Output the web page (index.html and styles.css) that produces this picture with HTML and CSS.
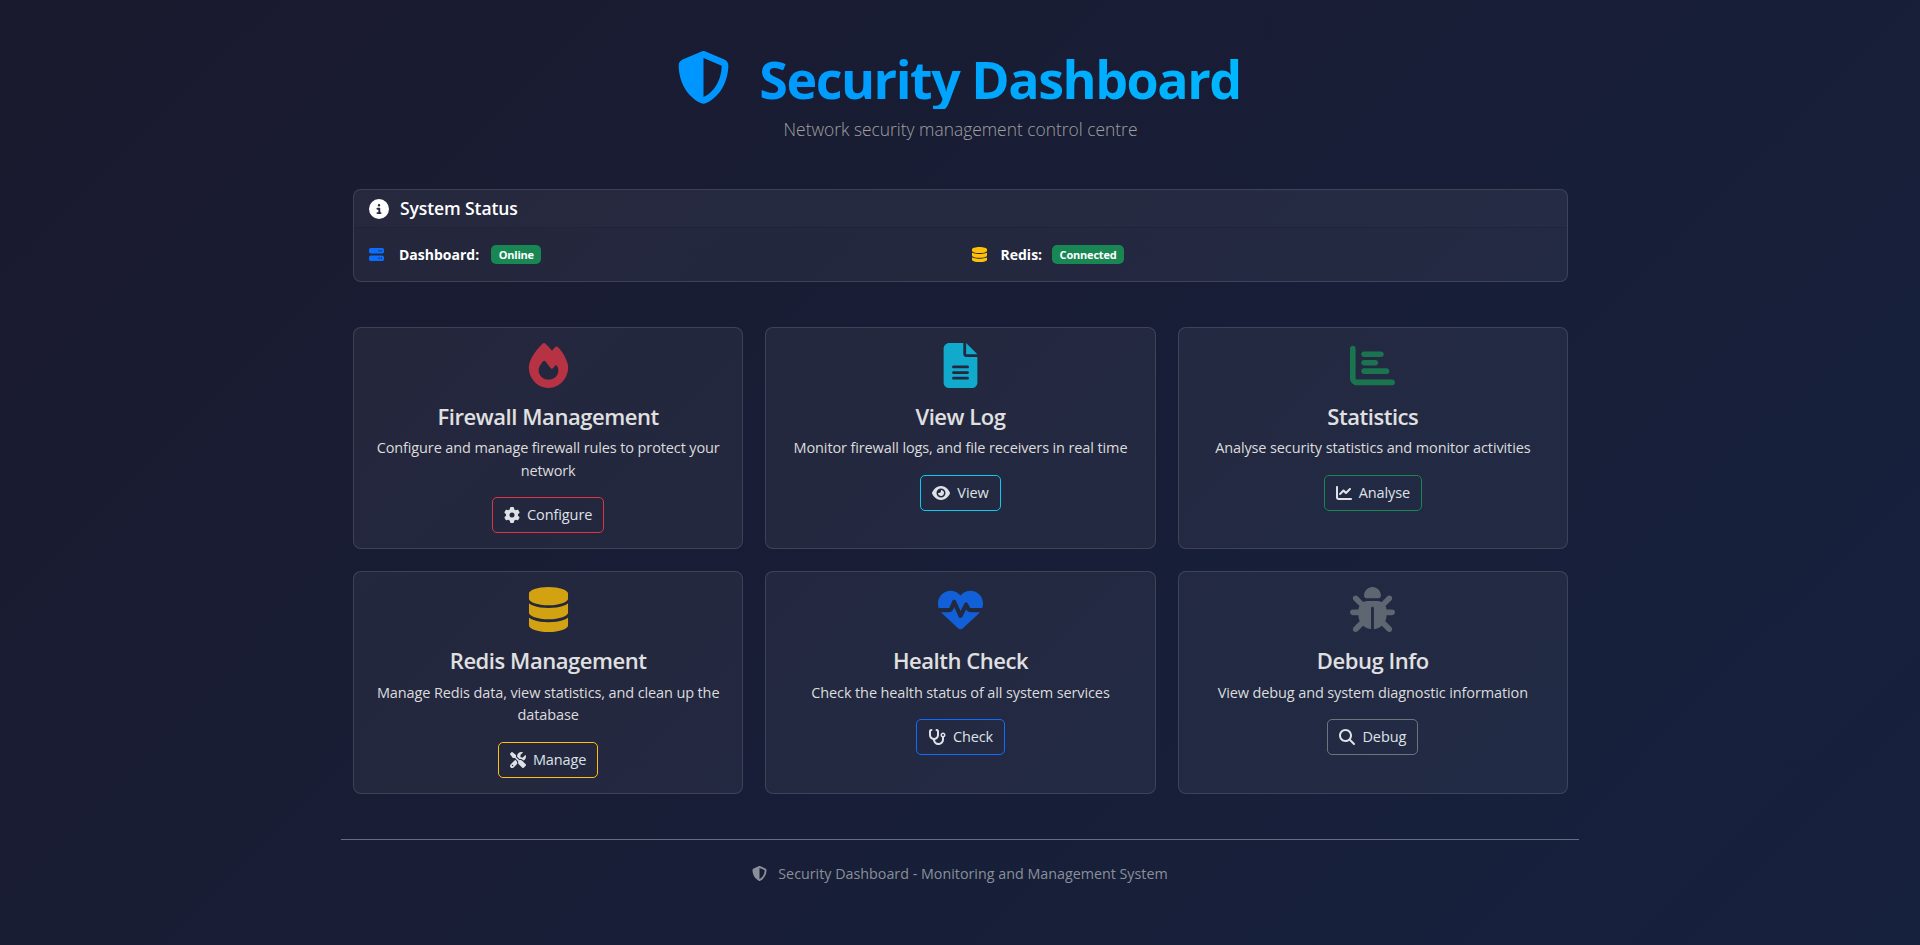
FILE: index.html
```html
<!DOCTYPE html>
<html lang="en">
  <head>
    <meta charset="UTF-8" />
    <meta name="viewport" content="width=device-width, initial-scale=1.0" />
    <title>Security Dashboard</title>
    <link rel="stylesheet" href="styles.css">
  </head>
  <body>
    <svg class="sprites" aria-hidden="true">
      <symbol id="i-shield" viewBox="0 0 512 512"><path d="M256 0c4.6 0 9.2 1 13.4 2.9L457.7 82.8c22 9.3 38.4 31 38.3 57.2c-.5 99.2-41.3 280.7-213.6 363.2c-16.7 8-36.1 8-52.8 0C57.3 420.7 16.5 239.2 16 140c-.1-26.2 16.3-47.9 38.3-57.2L242.7 2.9C246.8 1 251.4 0 256 0zm0 66.8V444.8C394 378 431.1 230.1 432 141.4L256 66.8l0 0z"/></symbol>
      <symbol id="i-db" viewBox="0 0 448 512" preserveAspectRatio="none"><path d="M448 80v48c0 44.2-100.3 80-224 80S0 172.2 0 128V80C0 35.8 100.3 0 224 0S448 35.8 448 80zM393.2 214.7c20.8-7.4 39.9-16.9 54.8-28.6V288c0 44.2-100.3 80-224 80S0 332.2 0 288V186.1c14.9 11.8 34 21.2 54.8 28.6C99.7 230.7 159.5 240 224 240s124.3-9.3 169.2-25.3zM0 346.1c14.9 11.8 34 21.2 54.8 28.6C99.7 390.7 159.5 400 224 400s124.3-9.3 169.2-25.3c20.8-7.4 39.9-16.9 54.8-28.6V432c0 44.2-100.3 80-224 80S0 476.2 0 432V346.1z"/></symbol>
    </svg>

    <div class="container">
      <header class="top">
        <h1 class="title">
          <svg class="title-icon"><use href="#i-shield"/></svg>
          <span class="title-text">Security Dashboard</span>
        </h1>
        <p class="lead">Network security management control centre</p>
      </header>

      <section class="status">
        <div class="status-head">
          <svg class="info-icon" viewBox="0 0 512 512"><path d="M256 512A256 256 0 1 0 256 0a256 256 0 1 0 0 512zM216 336h24V272H216c-13.3 0-24-10.7-24-24s10.7-24 24-24h48c13.3 0 24 10.7 24 24v88h8c13.3 0 24 10.7 24 24s-10.7 24-24 24H216c-13.3 0-24-10.7-24-24s10.7-24 24-24zm40-208a32 32 0 1 1 0 64 32 32 0 1 1 0-64z"/></svg>
          <h2>System Status</h2>
        </div>
        <div class="status-body">
          <div class="status-item">
            <svg class="status-icon blue" viewBox="0 0 512 512"><path d="M64 32C28.7 32 0 60.7 0 96v64c0 35.3 28.7 64 64 64H448c35.3 0 64-28.7 64-64V96c0-35.3-28.7-64-64-64H64zm280 72a24 24 0 1 1 0 48 24 24 0 1 1 0-48zm48 24a24 24 0 1 1 48 0 24 24 0 1 1 -48 0zM64 288c-35.3 0-64 28.7-64 64v64c0 35.3 28.7 64 64 64H448c35.3 0 64-28.7 64-64V352c0-35.3-28.7-64-64-64H64zm280 72a24 24 0 1 1 0 48 24 24 0 1 1 0-48zm56 24a24 24 0 1 1 48 0 24 24 0 1 1 -48 0z"/></svg>
            <strong>Dashboard:</strong>
            <span class="badge">Online</span>
          </div>
          <div class="status-item second">
            <svg class="status-icon yellow"><use href="#i-db"/></svg>
            <strong>Redis:</strong>
            <span class="badge">Connected</span>
          </div>
        </div>
      </section>

      <main class="cards">
        <div class="card">
          <svg class="card-icon red" viewBox="0 0 448 512"><path d="M159.3 5.4c7.8-7.3 19.9-7.2 27.7 .1c27.6 25.9 53.5 53.8 77.7 84c11-14.4 23.5-30.1 37-42.9c7.9-7.4 20.1-7.4 28 .1c34.6 33 63.9 76.6 84.5 118c20.3 40.8 33.8 82.5 33.8 111.9C448 404.2 348.2 512 224 512C98.4 512 0 404.1 0 276.5c0-38.4 17.8-85.3 45.4-131.7C73.3 97.7 112.7 48.6 159.3 5.4zM225.7 416c25.3 0 47.7-7 68.8-21c42.1-29.4 53.4-88.2 28.1-134.4c-4.5-9-16-9.6-22.5-2l-25.2 29.3c-6.6 7.6-18.5 7.4-24.7-.5c-16.5-21-46-58.5-62.8-79.8c-6.3-8-18.3-8.1-24.7-.1c-33.8 42.5-50.8 69.3-50.8 99.4C112 375.4 162.6 416 225.7 416z"/></svg>
          <h3>Firewall Management</h3>
          <p>Configure and manage firewall rules to protect your network</p>
          <a class="btn btn-red" href="#">
            <svg class="btn-icon" viewBox="0 0 512 512"><path d="M495.9 166.6c3.2 8.7 .5 18.4-6.4 24.6l-43.3 39.4c1.1 8.3 1.7 16.8 1.7 25.4s-.6 17.1-1.7 25.4l43.3 39.4c6.9 6.2 9.6 15.9 6.4 24.6c-4.4 11.9-9.7 23.3-15.8 34.3l-4.7 8.1c-6.6 11-14 21.4-22.1 31.2c-5.9 7.2-15.7 9.6-24.5 6.8l-55.7-17.7c-13.4 10.3-28.2 18.9-44 25.4l-12.5 57.1c-2 9.1-9 16.3-18.2 17.8c-13.8 2.3-28 3.5-42.5 3.5s-28.7-1.2-42.5-3.5c-9.2-1.5-16.2-8.7-18.2-17.8l-12.5-57.1c-15.8-6.5-30.6-15.1-44-25.4L83.1 425.9c-8.8 2.8-18.6 .3-24.5-6.8c-8.1-9.8-15.5-20.2-22.1-31.2l-4.7-8.1c-6.1-11-11.4-22.4-15.8-34.3c-3.2-8.7-.5-18.4 6.4-24.6l43.3-39.4C64.6 273.1 64 264.6 64 256s.6-17.1 1.7-25.4L22.4 191.2c-6.9-6.2-9.6-15.9-6.4-24.6c4.4-11.9 9.7-23.3 15.8-34.3l4.7-8.1c6.6-11 14-21.4 22.1-31.2c5.9-7.2 15.7-9.6 24.5-6.8l55.7 17.7c13.4-10.3 28.2-18.9 44-25.4l12.5-57.1c2-9.1 9-16.3 18.2-17.8C227.3 1.2 241.5 0 256 0s28.7 1.2 42.5 3.5c9.2 1.5 16.2 8.7 18.2 17.8l12.5 57.1c15.8 6.5 30.6 15.1 44 25.4l55.7-17.7c8.8-2.8 18.6-.3 24.5 6.8c8.1 9.8 15.5 20.2 22.1 31.2l4.7 8.1c6.1 11 11.4 22.4 15.8 34.3zM256 336a80 80 0 1 0 0-160 80 80 0 1 0 0 160z"/></svg>
            Configure
          </a>
        </div>

        <div class="card">
          <svg class="card-icon cyan" viewBox="0 0 384 512"><path d="M64 0C28.7 0 0 28.7 0 64V448c0 35.3 28.7 64 64 64H320c35.3 0 64-28.7 64-64V160H256c-17.7 0-32-14.3-32-32V0H64zM256 0V128H384L256 0zM112 256H272c8.8 0 16 7.2 16 16s-7.2 16-16 16H112c-8.8 0-16-7.2-16-16s7.2-16 16-16zm0 64H272c8.8 0 16 7.2 16 16s-7.2 16-16 16H112c-8.8 0-16-7.2-16-16s7.2-16 16-16zm0 64H272c8.8 0 16 7.2 16 16s-7.2 16-16 16H112c-8.8 0-16-7.2-16-16s7.2-16 16-16z"/></svg>
          <h3>View Log</h3>
          <p>Monitor firewall logs, and file receivers in real time</p>
          <a class="btn btn-cyan" href="#">
            <svg class="btn-icon wide" viewBox="0 0 576 512"><path d="M288 32c-80.8 0-145.5 36.8-192.6 80.6C48.6 156 17.3 208 2.5 243.7c-3.3 7.9-3.3 16.7 0 24.6C17.3 304 48.6 356 95.4 399.4C142.5 443.2 207.2 480 288 480s145.5-36.8 192.6-80.6c46.8-43.5 78.1-95.4 93-131.1c3.3-7.9 3.3-16.7 0-24.6c-14.9-35.7-46.2-87.7-93-131.1C433.5 68.8 368.8 32 288 32zM144 256a144 144 0 1 1 288 0 144 144 0 1 1 -288 0zm144-64c0 35.3-28.7 64-64 64c-7.1 0-13.9-1.2-20.3-3.3c-5.5-1.8-11.9 1.6-11.7 7.4c.3 6.9 1.3 13.8 3.2 20.7c13.7 51.2 66.4 81.6 117.6 67.9s81.6-66.4 67.9-117.6c-11.1-41.5-47.8-69.4-88.6-71.1c-5.8-.2-9.2 6.1-7.4 11.7c2.1 6.4 3.3 13.2 3.3 20.3z"/></svg>
            View
          </a>
        </div>

        <div class="card">
          <svg class="card-icon green" viewBox="0 0 512 512"><path d="M32 32c17.7 0 32 14.3 32 32V400c0 8.8 7.2 16 16 16H480c17.7 0 32 14.3 32 32s-14.3 32-32 32H80c-44.2 0-80-35.8-80-80V64C0 46.3 14.3 32 32 32zm96 96c0-17.7 14.3-32 32-32l192 0c17.7 0 32 14.3 32 32s-14.3 32-32 32l-192 0c-17.7 0-32-14.3-32-32zm32 64H288c17.7 0 32 14.3 32 32s-14.3 32-32 32H160c-17.7 0-32-14.3-32-32s14.3-32 32-32zm0 96H416c17.7 0 32 14.3 32 32s-14.3 32-32 32H160c-17.7 0-32-14.3-32-32s14.3-32 32-32z"/></svg>
          <h3>Statistics</h3>
          <p>Analyse security statistics and monitor activities</p>
          <a class="btn btn-green" href="#">
            <svg class="btn-icon" viewBox="0 0 512 512"><path d="M64 64c0-17.7-14.3-32-32-32S0 46.3 0 64V400c0 44.2 35.8 80 80 80H480c17.7 0 32-14.3 32-32s-14.3-32-32-32H80c-8.8 0-16-7.2-16-16V64zm406.6 86.6c12.5-12.5 12.5-32.8 0-45.3s-32.8-12.5-45.3 0L320 210.7l-57.4-57.4c-12.5-12.5-32.8-12.5-45.3 0l-112 112c-12.5 12.5-12.5 32.8 0 45.3s32.8 12.5 45.3 0L240 221.3l57.4 57.4c12.5 12.5 32.8 12.5 45.3 0l128-128z"/></svg>
            Analyse
          </a>
        </div>

        <div class="card">
          <svg class="card-icon yellow" viewBox="0 0 448 512"><use href="#i-db"/></svg>
          <h3>Redis Management</h3>
          <p>Manage Redis data, view statistics, and clean up the database</p>
          <a class="btn btn-yellow" href="#">
            <svg class="btn-icon" viewBox="0 0 512 512"><path d="M78.6 5C69.1-2.4 55.6-1.5 47 7L7 47c-8.5 8.5-9.4 22-2.1 31.6l80 104c4.5 5.9 11.6 9.4 19 9.4h54.1l109 109c-14.7 29-10 65.4 14.3 89.6l112 112c12.5 12.5 32.8 12.5 45.3 0l64-64c12.5-12.5 12.5-32.8 0-45.3l-112-112c-24.2-24.2-60.6-29-89.6-14.3l-109-109V104c0-7.5-3.5-14.5-9.4-19L78.6 5zM19.9 396.1C7.2 408.8 0 426.1 0 444.1C0 481.6 30.4 512 67.9 512c18 0 35.3-7.2 48-19.9L233.7 374.3c-7.8-20.9-9-43.6-3.6-65.1l-61.7-61.7L19.9 396.1zM512 144c0-10.5-1.1-20.7-3.2-30.5c-2.4-11.2-16.1-14.1-24.2-6l-63.9 63.9c-3 3-7.1 4.7-11.3 4.7H352c-8.8 0-16-7.2-16-16V102.6c0-4.2 1.7-8.3 4.7-11.3l63.9-63.9c8.1-8.1 5.2-21.8-6-24.2C388.7 1.1 378.5 0 368 0C288.5 0 224 64.5 224 144l0 .8 85.3 85.3c36-9.1 75.8 .5 104 28.7L429 274.5c49-23 83-72.8 83-130.5zM56 432a24 24 0 1 1 48 0 24 24 0 1 1 -48 0z"/></svg>
            Manage
          </a>
        </div>

        <div class="card">
          <svg class="card-icon blue" viewBox="0 0 512 512"><path d="M228.3 469.1L47.6 300.4c-4.2-3.9-8.2-8.1-11.9-12.4h87c22.6 0 43-13.6 51.7-34.5l10.5-25.2 49.3 109.5c3.8 8.5 12.1 14 21.4 14.1s17.8-5 22-13.3L320 253.7l1.7 3.4c9.5 19 28.9 31 50.1 31H476.3c-3.7 4.3-7.7 8.5-11.9 12.4L283.7 469.1c-7.5 7-17.4 10.9-27.7 10.9s-20.2-3.9-27.7-10.9zM503.7 240h-132c-3 0-5.8-1.7-7.2-4.4l-23.2-46.3c-4.1-8.1-12.4-13.3-21.5-13.3s-17.4 5.1-21.5 13.3l-41.4 82.8L205.9 158.2c-3.9-8.7-12.7-14.3-22.2-14.1s-18.1 5.9-21.8 14.8l-31.8 76.3c-1.2 3-4.2 4.9-7.4 4.9H16c-2.6 0-5 .4-7.3 1.1C3 225.2 0 208.2 0 190.9v-5.8c0-69.9 50.5-129.5 119.4-141C165 36.5 211.4 51.4 244 84l12 12 12-12c32.6-32.6 79-47.5 124.6-39.9C461.5 55.6 512 115.2 512 185.1v5.8c0 16.9-2.8 33.5-8.3 49.1z"/></svg>
          <h3>Health Check</h3>
          <p>Check the health status of all system services</p>
          <a class="btn btn-blue" href="#">
            <svg class="btn-icon wide" viewBox="0 0 576 512"><path d="M142.4 21.9c5.6 16.8-3.5 34.9-20.2 40.5L96 71.1V192c0 53 43 96 96 96s96-43 96-96V71.1l-26.1-8.7c-16.8-5.6-25.8-23.7-20.2-40.5s23.7-25.8 40.5-20.2l26.1 8.7C334.4 19.1 352 43.5 352 71.1V192c0 77.2-54.6 141.6-127.3 156.7C231 404.6 278.4 448 336 448c61.9 0 112-50.1 112-112V265.3c-28.3-12.3-48-40.5-48-73.3c0-44.2 35.8-80 80-80s80 35.8 80 80c0 32.8-19.7 61-48 73.3V336c0 97.2-78.8 176-176 176c-92.9 0-168.9-71.9-175.5-163.1C87.2 334.2 32 269.6 32 192V71.1c0-27.5 17.6-52 43.8-60.7l26.1-8.7c16.8-5.6 34.9 3.5 40.5 20.2zM480 224a32 32 0 1 0 0-64 32 32 0 1 0 0 64z"/></svg>
            Check
          </a>
        </div>

        <div class="card">
          <svg class="card-icon grey" viewBox="0 0 512 512"><path d="M256 0c53 0 96 43 96 96v3.6c0 15.7-12.7 28.4-28.4 28.4H188.4c-15.7 0-28.4-12.7-28.4-28.4V96c0-53 43-96 96-96zM41.4 105.4c12.5-12.5 32.8-12.5 45.3 0l64 64c.7 .7 1.3 1.4 1.9 2.1c14.2-7.3 30.4-11.4 47.5-11.4H312c17.1 0 33.2 4.1 47.5 11.4c.6-.7 1.2-1.4 1.9-2.1l64-64c12.5-12.5 32.8-12.5 45.3 0s12.5 32.8 0 45.3l-64 64c-.7 .7-1.4 1.3-2.1 1.9c6.2 12 10.1 25.3 11.1 39.5H480c17.7 0 32 14.3 32 32s-14.3 32-32 32H416c0 24.6-5.5 47.8-15.4 68.6c2.2 1.3 4.2 2.9 6 4.8l64 64c12.5 12.5 12.5 32.8 0 45.3s-32.8 12.5-45.3 0l-63.1-63.1c-24.5 21.8-55.8 36.2-90.3 39.6V240c0-8.8-7.2-16-16-16s-16 7.2-16 16V479.2c-34.5-3.4-65.8-17.8-90.3-39.6L86.6 502.6c-12.5 12.5-32.8 12.5-45.3 0s-12.5-32.8 0-45.3l64-64c1.9-1.9 3.9-3.4 6-4.8C101.5 367.8 96 344.6 96 320H32c-17.7 0-32-14.3-32-32s14.3-32 32-32H96.3c1.1-14.1 5-27.5 11.1-39.5c-.7-.6-1.4-1.2-2.1-1.9l-64-64c-12.5-12.5-12.5-32.8 0-45.3z"/></svg>
          <h3>Debug Info</h3>
          <p>View debug and system diagnostic information</p>
          <a class="btn btn-grey" href="#">
            <svg class="btn-icon" viewBox="0 0 512 512"><path d="M416 208c0 45.9-14.9 88.3-40 122.7L502.6 457.4c12.5 12.5 12.5 32.8 0 45.3s-32.8 12.5-45.3 0L330.7 376c-34.4 25.2-76.8 40-122.7 40C93.1 416 0 322.9 0 208S93.1 0 208 0S416 93.1 416 208zM208 352a144 144 0 1 0 0-288 144 144 0 1 0 0 288z"/></svg>
            Debug
          </a>
        </div>
      </main>

      <footer class="foot">
        <svg class="foot-icon"><use href="#i-shield"/></svg>
        <span>Security Dashboard - Monitoring and Management System</span>
      </footer>
    </div>
  </body>
</html>
```

FILE: styles.css
```css
* {
  box-sizing: border-box;
}
body {
  margin: 0;
  min-height: 945px;
  background: linear-gradient(135deg, #1a1a2e 0%, #16213e 100%);
  color: #e0e0e0;
  font-family: "Open Sans", "Noto Sans", sans-serif;
  font-size: 15px;
  line-height: 1.5;
}
svg {
  fill: currentColor;
}
.sprites {
  display: none;
}
.container {
  width: 1216px;
  margin: 0 auto;
  padding-left: 1px;
}

/* header */
.top {
  padding-top: 49px;
  text-align: center;
}
.title {
  display: flex;
  justify-content: center;
  align-items: center;
  gap: 29px;
  margin: 0;
  padding-right: 3px;
  font-size: 52px;
  font-weight: 700;
  line-height: 60px;
  letter-spacing: -1.5px;
}
.title-icon {
  width: 53px;
  height: 53px;
  margin-top: -3px;
  color: #0096ff;
}
.title-text {
  background: linear-gradient(90deg, #0098ff, #00b8ff);
  -webkit-background-clip: text;
  background-clip: text;
  color: transparent;
}
.lead {
  margin: 7px 0 0;
  font-size: 17.4px;
  font-weight: 300;
  line-height: 27px;
  color: #a0a0a0;
}

/* status panel */
.status {
  margin-top: 46px;
  height: 93px;
  border: 1px solid rgba(255, 255, 255, 0.12);
  border-radius: 8px;
  background: rgba(255, 255, 255, 0.05);
}
.status-head {
  display: flex;
  align-items: center;
  gap: 11px;
  height: 38px;
  padding: 0 15px;
  border-bottom: 1px solid rgba(0, 0, 0, 0.125);
  background: rgba(255, 255, 255, 0.01);
  border-radius: 8px 8px 0 0;
}
.status-head h2 {
  margin: 0;
  font-size: 17.5px;
  font-weight: 600;
  color: #fff;
  letter-spacing: -0.1px;
}
.info-icon {
  width: 20px;
  height: 20px;
  color: #fff;
}
.status-body {
  display: grid;
  grid-template-columns: 1fr 1fr;
  padding: 0 15px;
  height: 53px;
  align-items: center;
}
.status-item {
  display: flex;
  align-items: center;
  color: #fff;
  font-size: 14px;
}
.status-item strong {
  font-weight: 700;
}
.status-item.second {
  padding-left: 11px;
}
.status-icon {
  width: 15px;
  height: 15px;
  margin-right: 15px;
}
.second .status-icon {
  margin-right: 14px;
}
.badge {
  margin-left: 12px;
  padding: 0 7.5px;
  height: 19px;
  border-radius: 5px;
  background: #198754;
  color: #fff;
  font-size: 11px;
  font-weight: 700;
  line-height: 19px;
  letter-spacing: -0.2px;
}
.second .badge {
  margin-left: 10px;
}
.blue {
  color: #0d6efd;
}
.yellow {
  color: #ffc107;
}

/* cards */
.cards {
  display: grid;
  grid-template-columns: repeat(3, 1fr);
  gap: 22px;
  margin-top: 45px;
}
.card {
  display: flex;
  flex-direction: column;
  align-items: center;
  height: 222.4px;
  padding: 15px 16px 0;
  border: 1px solid rgba(255, 255, 255, 0.12);
  border-radius: 8px;
  background: rgba(255, 255, 255, 0.05);
  text-align: center;
}
.card-icon {
  width: 45px;
  height: 45px;
  flex: none;
  opacity: 0.8;
}
.card-icon.red {
  color: #dc3545;
}
.card-icon.cyan {
  color: #0dcaf0;
}
.card-icon.green {
  color: #198754;
}
.card-icon.grey {
  color: #6c757d;
}
.card h3 {
  margin: 11.6px 0 0;
  font-size: 22px;
  font-weight: 600;
  line-height: 33px;
  letter-spacing: -0.45px;
  color: #e0e0e0;
}
.card p {
  margin: 4.6px 0 0;
  font-size: 14.5px;
  line-height: 22.5px;
  letter-spacing: -0.12px;
  color: #dcdcdc;
}
.btn {
  display: flex;
  align-items: center;
  gap: 7px;
  height: 36px;
  margin-top: 15px;
  padding: 0 11px;
  border: 1px solid;
  border-radius: 5px;
  color: #dee2e6;
  font-size: 14.5px;
  letter-spacing: -0.1px;
  text-decoration: none;
}
.btn-icon {
  width: 16px;
  height: 16px;
}
.btn-icon.wide {
  width: 18px;
}
.btn-red {
  border-color: #dc3545;
}
.btn-cyan {
  border-color: #0dcaf0;
}
.btn-green {
  border-color: #198754;
}
.btn-yellow {
  border-color: #ffc107;
}
.btn-blue {
  border-color: #0d6efd;
}
.btn-grey {
  border-color: #6c757d;
}

/* footer */
.foot {
  display: flex;
  justify-content: center;
  align-items: center;
  gap: 11px;
  margin: 45.2px -11px 0 -12px;
  padding-top: 23px;
  border-top: 1px solid rgba(255, 255, 255, 0.35);
  color: #8a9099;
  font-size: 14.3px;
}
.foot-icon {
  width: 15px;
  height: 15px;
}
```
